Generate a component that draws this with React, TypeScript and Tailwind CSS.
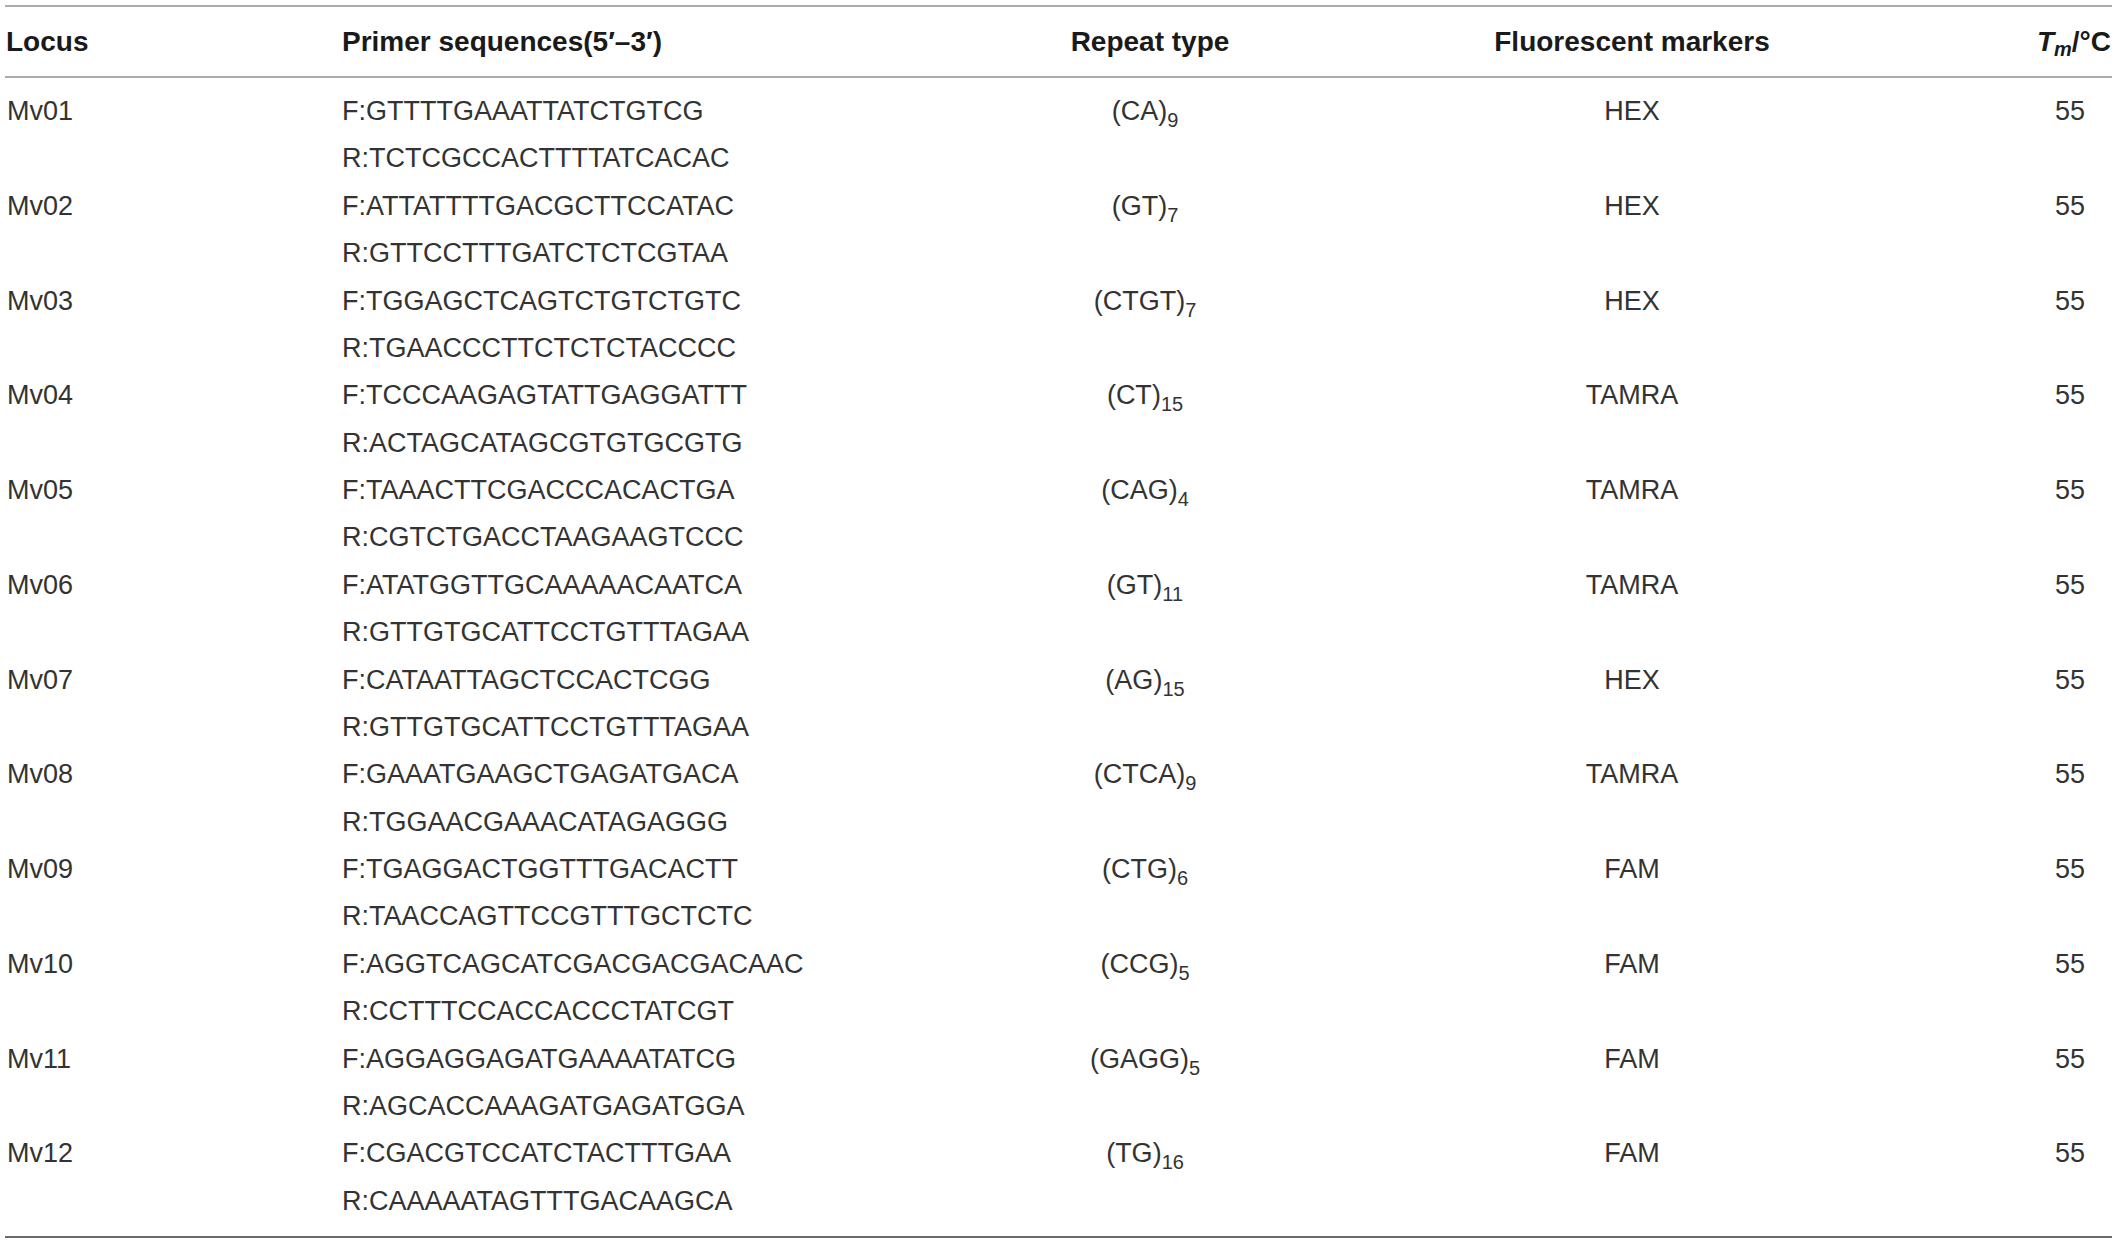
const rows = [
  { locus: 'Mv01', f: 'F:GTTTTGAAATTATCTGTCG', r: 'R:TCTCGCCACTTTTATCACAC', motif: 'CA', n: '9', marker: 'HEX' },
  { locus: 'Mv02', f: 'F:ATTATTTTGACGCTTCCATAC', r: 'R:GTTCCTTTGATCTCTCGTAA', motif: 'GT', n: '7', marker: 'HEX' },
  { locus: 'Mv03', f: 'F:TGGAGCTCAGTCTGTCTGTC', r: 'R:TGAACCCTTCTCTCTACCCC', motif: 'CTGT', n: '7', marker: 'HEX' },
  { locus: 'Mv04', f: 'F:TCCCAAGAGTATTGAGGATTT', r: 'R:ACTAGCATAGCGTGTGCGTG', motif: 'CT', n: '15', marker: 'TAMRA' },
  { locus: 'Mv05', f: 'F:TAAACTTCGACCCACACTGA', r: 'R:CGTCTGACCTAAGAAGTCCC', motif: 'CAG', n: '4', marker: 'TAMRA' },
  { locus: 'Mv06', f: 'F:ATATGGTTGCAAAAACAATCA', r: 'R:GTTGTGCATTCCTGTTTAGAA', motif: 'GT', n: '11', marker: 'TAMRA' },
  { locus: 'Mv07', f: 'F:CATAATTAGCTCCACTCGG', r: 'R:GTTGTGCATTCCTGTTTAGAA', motif: 'AG', n: '15', marker: 'HEX' },
  { locus: 'Mv08', f: 'F:GAAATGAAGCTGAGATGACA', r: 'R:TGGAACGAAACATAGAGGG', motif: 'CTCA', n: '9', marker: 'TAMRA' },
  { locus: 'Mv09', f: 'F:TGAGGACTGGTTTGACACTT', r: 'R:TAACCAGTTCCGTTTGCTCTC', motif: 'CTG', n: '6', marker: 'FAM' },
  { locus: 'Mv10', f: 'F:AGGTCAGCATCGACGACGACAAC', r: 'R:CCTTTCCACCACCCTATCGT', motif: 'CCG', n: '5', marker: 'FAM' },
  { locus: 'Mv11', f: 'F:AGGAGGAGATGAAAATATCG', r: 'R:AGCACCAAAGATGAGATGGA', motif: 'GAGG', n: '5', marker: 'FAM' },
  { locus: 'Mv12', f: 'F:CGACGTCCATCTACTTTGAA', r: 'R:CAAAAATAGTTTGACAAGCA', motif: 'TG', n: '16', marker: 'FAM' },
];

const cols = 'grid grid-cols-[337px_558px_500px_460px_252px]';

export default function App() {
  return (
    <div className="w-[2117px] h-[1242px] bg-white px-[5px] pt-[5px] font-['Liberation_Sans',Arial,sans-serif]">
      <div className={`${cols} h-[73px] items-center border-t-2 border-b-2 border-[#ababab] text-[28px] font-bold text-[#1a1a1a]`}>
        <div className="pl-[1px]">Locus</div>
        <div>Primer sequences(5′–3′)</div>
        <div className="text-center">Repeat type</div>
        <div className="text-center pl-[4px]">Fluorescent markers</div>
        <div className="text-right pr-[1px]">
          <i>T</i><sub className="text-[20px] italic">m</sub>/°C
        </div>
      </div>

      <div className="pt-[10px] pb-[11px] border-b-2 border-[#6b6b6b] text-[27px] leading-[47.37px] text-[#333333]">
        {rows.map(r => (
          <div key={r.locus} className={cols}>
            <div className="pl-[2px]">{r.locus}</div>
            <div>
              <div>{r.f}</div>
              <div>{r.r}</div>
            </div>
            <div className="text-center pr-[10px]">
              ({r.motif})<sub className="text-[20px] -bottom-[0.35em]">{r.n}</sub>
            </div>
            <div className="text-center pl-[4px]">{r.marker}</div>
            <div className="text-right pr-[27px]">55</div>
          </div>
        ))}
      </div>
    </div>
  );
}
